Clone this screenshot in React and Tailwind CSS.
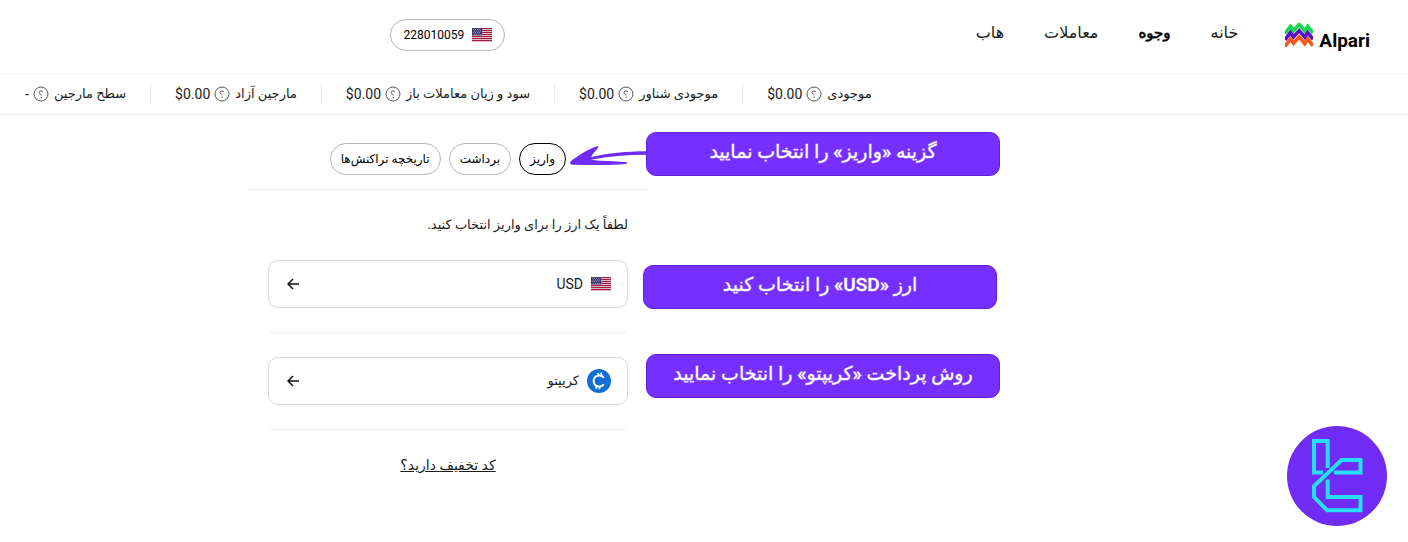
const navItems = [
  { label: "خانه" },
  { label: "وجوه", active: true },
  { label: "معاملات" },
  { label: "هاب" },
]

const stats = [
  { label: "موجودی", value: "$0.00" },
  { label: "موجودی شناور", value: "$0.00" },
  { label: "سود و زیان معاملات باز", value: "$0.00" },
  { label: "مارجین آزاد", value: "$0.00" },
  { label: "سطح مارجین", value: "-" },
]

const tabs = [
  { label: "واریز", active: true },
  { label: "برداشت" },
  { label: "تاریخچه تراکنش‌ها" },
]

function AlpariMark() {
  return (
    <svg viewBox="0 0 28 24" className="h-6 w-7" fill="none" strokeWidth="3.6" aria-hidden="true">
      <path d="M0 10.4 L5.5 3.4 L8.5 7.6 L14.2 1.4 L19.8 8 L22.7 3.4 L28 9.8" stroke="#12d94c" />
      <path d="M0 16.8 L5.5 9.6 L8.5 13.8 L14.2 7.6 L19.8 14.2 L22.7 9.6 L28 16.2" stroke="#5a0fc8" />
      <path d="M0 23.4 L5.5 16 L8.5 20.2 L14.2 14 L19.8 20.6 L22.7 16 L28 22.8" stroke="#f4581c" />
    </svg>
  )
}

function UsFlag() {
  const stripes = [0, 2, 4, 6, 8, 10, 12]
  return (
    <svg viewBox="0 0 20 14" className="h-[14px] w-5 shrink-0" aria-hidden="true">
      <rect width="20" height="14" fill="#fff" />
      {stripes.map((y) => (
        <rect key={y} y={y} width="20" height="1.3" fill="#a01c40" />
      ))}
      <rect width="10" height="7.4" fill="#3c3b6e" />
      {[1.2, 3, 4.8, 6.4].map((y, row) =>
        [1, 3, 5, 7].map((x) => (
          <circle key={`${x}-${y}`} cx={x + (row % 2 ? 1.5 : 0.5)} cy={y} r="0.45" fill="#fff" />
        ))
      )}
    </svg>
  )
}

function HelpIcon() {
  return (
    <svg viewBox="0 0 16 16" className="size-4 shrink-0" fill="none" stroke="#555" aria-hidden="true">
      <circle cx="8" cy="8" r="7" strokeWidth="1" />
      <path d="M10 5.9 C9.4 4.5 6 4.6 6 6.6 C6 8.3 8.2 7.8 8.2 9.4" strokeWidth="1" />
      <circle cx="8.2" cy="11.3" r="0.3" />
    </svg>
  )
}

function ArrowLeft() {
  return (
    <svg viewBox="0 0 12 12" className="size-3" fill="none" stroke="#111" strokeWidth="1.5" aria-hidden="true">
      <path d="M12 6 H1.2 M6 1 L1 6 L6 11" />
    </svg>
  )
}

function CryptoIcon() {
  return (
    <svg viewBox="0 0 24 24" className="size-6 shrink-0" aria-hidden="true">
      <circle cx="12" cy="12" r="12" fill="#146fd4" />
      <g fill="none" stroke="#fff" strokeWidth="2">
        <path d="M16.8 8.8 A5.6 5.6 0 1 0 16.8 15.2" />
        <path d="M10.9 4 L11.6 7 M14 3.7 L14.6 6.8 M9.2 17 L9.4 20 M12.4 17.2 L12.6 20.2" strokeWidth="1.6" />
      </g>
    </svg>
  )
}

function PointerArrow() {
  return (
    <svg
      viewBox="0 0 78 24"
      className="absolute top-[31px] left-[321px] h-6 w-[78px]"
      fill="#6f2cf5"
      aria-hidden="true"
    >
      <path d="M78 5.3 C58 5.3 38 7.4 22 11 C25 6 28 4 29.5 0.8 C29.5 0 28.5 0 27.5 0.6 C20 3 8 10 1.6 15.6 C0.4 17.4 1.5 18.8 4 18.8 C22 18.8 40 19.8 57 18 C59 17.4 58.6 16.6 57 16.2 C46 15 34 15.4 22 13.8 C39 10.6 58 8.8 78 8.8 Z" />
    </svg>
  )
}

function Callout({ children, className }) {
  return (
    <div
      className={`absolute flex h-11 w-[354px] justify-center rounded-[10px] border border-[#5f1fdc] bg-[#752fff] text-[19px] leading-[38px] font-medium whitespace-nowrap text-white [-webkit-text-stroke:1px_#ffffff66] ${className}`}
    >
      {children}
    </div>
  )
}

function MethodButton({ icon, children }) {
  return (
    <button
      type="button"
      className="flex h-12 w-full items-center gap-2 rounded-[10px] border border-[#d8d8d8] px-4"
    >
      {icon}
      {children}
      <span className="mr-auto ml-[2px]">
        <ArrowLeft />
      </span>
    </button>
  )
}

function TradingFinderBadge() {
  return (
    <div className="fixed right-[21px] bottom-4 size-[100px] rounded-full bg-[#702cf4]">
      <svg viewBox="0 0 100 100" className="size-full" fill="none" stroke="#25dff5" strokeWidth="4" aria-hidden="true">
        <path d="M40.7 42 V15 H27 V46.5 H36" />
        <path d="M47 46.5 H73.5 V34 H54.5 L27 60 V71 L40 84.3 H73.5 V71 H40.7 V53.5" />
      </svg>
    </div>
  )
}

export default function App() {
  return (
    <div dir="rtl" className="min-h-screen bg-white font-[Roboto,'DejaVu_Sans',sans-serif] text-[#1c1c1c]">
      <header className="flex h-[74px] justify-between border-b border-[#f2f2f2] pr-[38px] pt-[19px]">
        <div className="flex items-start gap-[47px]">
          <a href="#" dir="ltr" className="flex items-start gap-[6px] pt-1 text-black">
            <AlpariMark />
            <span className="pt-[6px] text-[19px] leading-6 font-bold">Alpari</span>
          </a>
          <nav className="flex gap-10 text-base leading-7">
            {navItems.map((item) => (
              <a
                key={item.label}
                href="#"
                className={item.active ? "text-[15px] text-black [-webkit-text-stroke:1px_#000000aa]" : ""}
              >
                {item.label}
              </a>
            ))}
          </nav>
        </div>
        <button
          type="button"
          className="ml-[28.5%] flex h-8 items-center gap-2 rounded-full border border-[#b8b8b8] px-3 text-xs text-black"
        >
          <UsFlag />
          228010059
        </button>
      </header>

      <div className="flex h-[41px] items-center justify-end border-b border-[#f2f2f2] pl-[25px]">
        <dl className="flex divide-x divide-[#eeeeee]">
          {stats.map((stat) => (
            <div key={stat.label} className="flex h-5 items-center gap-1 px-6 last:pl-0">
              <dt className="flex items-center gap-[5px] text-[13px] whitespace-nowrap">
                {stat.label}
                <HelpIcon />
              </dt>
              <dd dir="ltr" className="text-sm">
                {stat.value}
              </dd>
            </div>
          ))}
        </dl>
      </div>

      <main dir="ltr" className="grid grid-cols-[248fr_400px_760fr]">
        <section dir="rtl" className="col-start-2">
          <div className="relative border-b border-[#f2f2f2] px-[82px] pt-7 pb-[14px]">
            <div className="flex gap-2">
              {tabs.map((tab) => (
                <button
                  key={tab.label}
                  type="button"
                  className={`h-8 rounded-full border px-[10px] text-xs whitespace-nowrap text-black ${
                    tab.active ? "border-black" : "border-[#b8b8b8]"
                  }`}
                >
                  {tab.label}
                </button>
              ))}
            </div>
            <PointerArrow />
            <Callout className="top-[17px] left-[398px]">گزینه «واریز» را انتخاب نمایید</Callout>
          </div>

          <div className="px-5">
            <p className="pt-[25px] text-[13px] leading-5">لطفاً یک ارز را برای واریز انتخاب کنید.</p>
            <div className="relative border-b border-[#f2f2f2] pt-[25px] pb-6">
              <MethodButton icon={<UsFlag />}>
                <span className="text-sm">USD</span>
              </MethodButton>
              <Callout className="top-[30px] left-[375px]">ارز «USD» را انتخاب کنید</Callout>
            </div>
            <div className="relative border-b border-[#f2f2f2] py-6">
              <MethodButton icon={<CryptoIcon />}>
                <span className="text-[13px]">کریپتو</span>
              </MethodButton>
              <Callout className="top-[21px] left-[378px]">روش پرداخت «کریپتو» را انتخاب نمایید</Callout>
            </div>
            <div className="pt-[25px] text-center text-sm leading-5">
              <a href="#" className="underline">
                کد تخفیف دارید؟
              </a>
            </div>
          </div>
        </section>
      </main>
      <TradingFinderBadge />
    </div>
  )
}
